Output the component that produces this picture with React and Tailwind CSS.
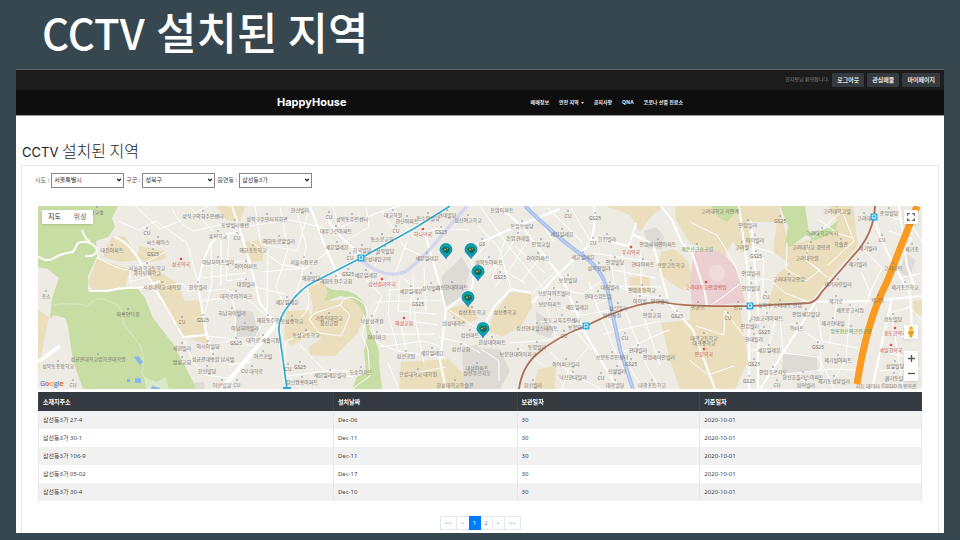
import React from "react";
import { ChevronDown } from "lucide-react";

const GREEN = [
  "M38 205H118L112 217L115 226L108 236L96 240L97 255L88 275L88 289L108 290L137 287L145 297L153 317L173 343L197 388H83L73 360L68 325L65 317L54 314L50 318L52 297L59 277L48 268L38 266Z",
  "M324 283Q329 290 340 289Q356 290 364 302L370 330Q381 346 379 362L382 388H352L357 376L366 372L364 350L367 335L365 316Q357 296 340 295Q330 299 324 300L328 292Z",
  "M711 205H742L727 221L718 216Z",
  "M780 205H805L809 232L790 246L785 245L788 225Z",
  "M808 232L829 227L838 219L836 229L824 236L812 240Z",
];

const TAN = [
  "M78 252L87 251L83 273L80 272Z",
  "M112 236L125 235L139 259L119 261L103 256Z",
  "M97 258L130 268L125 287L93 289L88 281Z",
  "M139 245L166 250L165 258L146 262L138 256Z",
  "M150 266L176 281L185 300L200 299L205 335L182 337L172 320L158 293L146 275Z",
  "M190 338L206 335L208 343Z",
  "M38 309L49 316L43 345L38 372Z",
  "M216 205H245L240 221L226 219Z",
  "M245 240L264 239L263 260L251 261Z",
  "M308 286L324 281L331 300L352 297L365 308L358 332L335 355L310 354L309 346L322 337L308 330L313 307Z",
  "M286 310L309 309L311 332L292 345L284 338Z",
  "M401 361L449 358L465 375L463 388H399Z",
  "M446 308L469 302L478 318L461 324Z",
  "M494 313L510 291L531 292L532 306L521 325L502 336L488 330Z",
  "M538 368L556 365L555 388H533Z",
  "M605 205H665L653 213L640 231L630 214Z",
  "M661 251L674 248L688 260L693 281L682 289L668 280L657 270Z",
  "M629 276L649 275L651 291L630 293Z",
  "M661 322L690 319L690 305H740L748 360L735 388H680L670 359Z",
  "M675 205H712L719 216L742 205H779L789 245L808 239L824 236L837 220L828 205H853L858 245L830 276L812 299L768 303L777 273L790 263L773 251L777 221L746 221L753 245L742 252L733 241L724 255L711 247L690 243L676 219Z",
  "M913 300L923 299V314L914 315Z",
];

const GREY = [
  "M235 308L253 311L259 335L236 336Z",
  "M442 275L462 256L470 270L462 296L444 306Z",
  "M462 347L478 343V388H464Z",
  "M478 347L500 348L510 370L500 388H478Z",
  "M536 310L545 317L554 330L550 337L537 333Z",
  "M644 230L656 226L664 235L662 249L648 247Z",
  "M783 353L817 354L818 371L782 372Z",
  "M905 252L916 259L909 276L901 272Z",
  "M191 382L204 381L205 388H190Z",
];

const MAIN_ROADS = [
  "M38 255Q46 262 54 257T73 251L78 242Q89 238 96 247Q99 252 91 255L85 255",
  "M82 229Q85 238 90 241",
  "M89 290L108 290Q122 286 137 287L145 286L160 280",
  "M114 236Q130 240 144 268Q160 295 183 336L206 334",
  "M198 284Q201 305 207 335L212 352",
  "M198 284Q203 255 212 241Q223 231 238 232",
  "M232 205L242 235L252 270L260 302L276 323",
  "M276 323L220 388",
  "M310 205L323 240L342 284",
  "M326 216Q339 238 361 253",
  "M423 225L438 278L446 309L440 360L446 388",
  "M468 248Q477 275 471 289L446 309",
  "M500 205L522 226L562 277L585 332L618 388",
  "M470 246L520 224L560 208",
  "M594 205Q597 239 583 250L554 277L532 302",
  "M480 332L494 306L511 288L531 292",
  "M632 233L653 243L669 302L693 329L715 388",
  "M595 237L629 245L636 222",
  "M690 245L705 292L707 305",
  "M661 205L672 219L682 242L690 251",
  "M739 205L749 279V388",
  "M751 220L758 302V388",
  "M875 220Q880 238 894 264L910 293L912 328",
  "M815 302L760 388",
  "M810 301L870 300L922 295",
  "M892 296L872 388",
  "M899 205L907 265L914 285",
];

const MINOR_ROADS = [
  "M97 256Q113 266 126 269L143 263L167 250", "M130 265V281L159 272", "M165 285L182 282L190 292",
  "M118 220L139 229L156 220L187 242L192 260L199 284", "M135 205L160 228L180 220L208 205",
  "M172 208Q180 225 194 230L223 223L237 231", "M190 206L213 230", "M205 290L225 288L251 301L276 323",
  "M199 300L231 297L235 308L236 338L208 335", "M211 243L212 282L205 312", "M221 234L221 285", "M229 234L226 280L248 277", "M205 265L251 259", "M202 277L246 272",
  "M208 345L232 339L251 345L261 325", "M212 355L229 364L250 361", "M184 339L193 361L205 374L228 377", "M255 205L261 243L297 250L310 205", "M250 225L291 219L328 228", "M280 205L288 248L276 286L285 305", "M296 207L306 244L302 274L294 299", "M262 271L306 267L330 249", "M268 249L267 314", "M250 240L280 263L305 268", "M255 286L285 293", "M310 330L286 340L284 370L301 388", "M300 344L325 370L353 376", "M308 286Q311 311 301 316", "M315 312L340 304L350 314L341 335L319 332L309 318Z", "M340 304Q346 291 359 299T365 320L362 334L368 349L370 375L352 388", "M286 375L335 369L367 372", "M332 205L340 226L383 210L400 205", "M366 205L369 226L342 242", "M382 210L405 247L424 256", "M392 206L414 236L435 228L470 229", "M407 240L396 271L412 285L410 320L438 324", "M378 260L366 278L382 295L371 320L377 342L398 350L445 357",
  "M391 277L388 314L399 351", "M400 277L398 310L436 313", "M413 272L415 318L424 362", "M424 267L426 310", "M433 286L388 289", "M441 299L375 301", "M401 321L406 349", "M381 333L434 333", "M379 346L424 340L440 345", "M449 309L474 325L488 328", "M439 336L463 342L480 352", "M399 375L446 366", "M388 362L399 388",
  "M480 205L509 246L535 277L552 299", "M478 224L499 247L511 288", "M490 239L473 259", "M505 239L492 278", "M522 226L506 253L486 274", "M530 236L513 263L495 286", "M543 252L521 281", "M556 270L533 292", "M530 205L554 241", "M548 207L583 242", "M571 207L589 238L622 243", "M484 258L525 282", "M515 245L545 272",
  "M552 287L583 293L604 278L632 292L667 298", "M549 301L583 314L616 308L635 304", "M540 321L565 318L592 349", "M510 342L549 339L590 327", "M544 298L558 343", "M589 281L596 303L609 298", "M596 303L621 364L636 388", "M608 315L629 365L643 388", "M625 310L647 365L660 388", "M640 304L660 364", "M603 333L660 320", "M616 355L650 337L669 329", "M551 351L568 371L562 388", "M588 347L567 370L601 388", "M520 348L545 365", "M481 348L499 360V380", "M610 252L614 281", "M622 250L627 293", "M640 252L642 303", "M593 252L650 261", "M613 269L655 277", "M620 285L661 286",
  "M690 221L717 234L728 252L735 264L741 282L724 295L711 304", "M751 245L774 252", "M748 260L764 258L762 304", "M748 280L769 278L785 292L811 302", "M787 242L786 268L806 280L820 269L803 257", "M809 242L806 259L827 276", "M813 236L842 210L854 240L828 264", "M818 218L837 232L853 237", "M760 304L775 320L769 345L751 350", "M780 315L783 352L818 356L835 388", "M791 322L820 341L822 385", "M816 306L822 340L858 347", "M837 302L829 343", "M850 303L846 359L830 385", "M861 271L871 293L859 315", "M863 248L882 267L868 295", "M881 213L910 222L922 241", "M889 230L912 238L895 259", "M900 277L922 272", "M888 313L910 306L922 320", "M887 330L916 340", "M882 350L913 358", "M879 370L921 367", "M890 303L903 388", "M777 374L832 368L863 369", "M696 325L724 334L725 310L744 335", "M689 359L708 374L734 365",
];

const LABELS = [
  [97, 211, "학교숲"], [203, 215, "성북구의회주민센터"], [235, 224, "동방빌라맨션"], [147, 232, "CU"], [158, 241, "씨스페이스"],
  [112, 249, "대진아파트"], [153, 253, "GS25"], [218, 235, "홍익학교"], [237, 237, "CU"], [253, 249, "혜화초등학교"], [181, 263, "성공약국", "r"],
  [147, 267, "서울과학고등학교"], [147, 272, "과학영재학교", "n"], [218, 261, "아남하이츠빌라"], [246, 265, "아이아파트"], [162, 286, "서경대학교 대학원"],
  [198, 286, "한양빌라"], [246, 283, "대원빌라"], [46, 295, "초소"], [236, 295, "대학로아이파크"], [128, 313, "와룡언덕길"], [232, 312, "하남하이빌라"],
  [182, 321, "CU"], [203, 319, "GS25"], [245, 327, "아남하이빌라"], [182, 347, "세한빌라"], [208, 345, "아시아빌딩"], [236, 342, "GS25"],
  [98, 358, "성균관대학교법학관대학원"], [182, 361, "명륜교회"], [213, 358, "성균관대병원 남자빌"], [58, 365, "성북동종합학교"], [207, 370, "한신빌딩"],
  [252, 370, "CU 대학로"], [222, 384, "덕산빌딩"], [237, 384, "CU"], [73, 384, "CU"],
  [300, 209, "한신빌라"], [267, 218, "성북구주민자치회관"], [329, 216, "CU"], [352, 218, "성북동주민센터"], [336, 230, "대우그린아파트"], [279, 240, "혜화동로얄빌라"],
  [337, 246, "세븐일레븐"], [393, 214, "대교학원"], [407, 220, "한신아파트"], [428, 217, "동소문빌딩"], [447, 214, "현대빌딩"], [468, 219, "성신여고학교"], [396, 230, "CU"],
  [382, 238, "동소문교회"], [423, 233, "하나약국", "r"], [441, 231, "GS25"], [362, 249, "한국빌딩"], [385, 250, "성북빌딩"], [350, 257, "CU"], [377, 258, "한성대입구역"],
  [427, 257, "세븐일레븐"], [304, 261, "서울시장공관"], [311, 277, "혜화빌딩"], [336, 280, "혜화동천주교회"], [348, 273, "GS25"], [366, 274, "세븐일레븐"],
  [382, 283, "삼선감리약국", "r"], [411, 290, "세븐일레븐"], [431, 287, "성북빌라"], [452, 286, "삼선현대아파트"], [287, 301, "세븐일레븐"], [418, 303, "GS25"],
  [268, 319, "혜화동주민"], [292, 320, "동성중학교"], [329, 317, "가톨릭대학교"], [329, 322, "성신교정", "n"], [372, 320, "낙산성곽길"], [404, 322, "혜성교회", "r"], [454, 322, "삼성테라스"],
  [306, 334, "동성고등학교"], [377, 336, "아이파크"], [263, 339, "대학로 예술극장"], [472, 311, "삼선초등학교"], [470, 334, "삼선마트"], [461, 348, "삼선교회"],
  [263, 355, "아르코빌"], [406, 355, "삼선공원"], [432, 352, "세븐일레븐"], [288, 368, "CU"], [300, 366, "GS25"], [330, 374, "세븐일레븐빌라"],
  [361, 371, "동숭아파트"], [418, 373, "한성대학교 대학원"], [302, 381, "창신쌍용아파트"], [455, 384, "한성대학교학술관"],
  [502, 209, "돈암아파트"], [568, 215, "CU"], [595, 217, "GS25"], [522, 225, "돈암동성당"], [518, 237, "돈암현대빌"], [562, 233, "세븐일레븐"],
  [541, 243, "안암교실"], [593, 242, "CU"], [607, 238, "한진빌라"], [658, 243, "안암래미안아파트"], [631, 251, "우리약국", "r"], [482, 243, "GS"],
  [538, 257, "아이아파트"], [583, 256, "세븐일레븐"], [489, 261, "성북동아파트"], [599, 267, "성북천빌라"], [615, 261, "안암빌딩"], [643, 263, "현대아파트"],
  [671, 264, "용문고등학교"], [500, 276, "GS25"], [568, 279, "보문빌딩"], [610, 286, "대림빌라"], [642, 289, "안암초등학교"], [554, 292, "보문하이츠빌라"],
  [598, 295, "현대스위트빌"], [550, 303, "보문아파트"], [577, 306, "세븐일레븐"], [640, 300, "아이빌"], [618, 307, "성신빌라"], [660, 300, "안암빌라"],
  [505, 311, "삼선중학교"], [612, 314, "보문사길"], [652, 314, "안암교회"], [677, 315, "GS25"], [562, 319, "동도교육주민센터"], [575, 326, "보문역"],
  [537, 327, "삼선현대힐스테이트"], [564, 335, "CU"], [492, 341, "한성대아파트"], [518, 353, "보문현대아이파크"], [537, 346, "동망빌라"], [625, 337, "CU"],
  [638, 349, "현대빌라"], [612, 356, "보문동주민센터"], [659, 356, "안암래미안빌라"], [477, 367, "대성아파트"], [477, 372, "삼선푸르지오", "n"], [566, 363, "아이파크빌라"],
  [631, 363, "GS25"], [573, 376, "낙산현대빌라"], [601, 377, "CU"], [617, 370, "신설빌라"], [615, 384, "대광빌딩"], [652, 384, "대광초등학교"], [533, 384, "창신빌라"],
  [720, 210, "고려대학교 자연계"], [837, 210, "고려대학교빌"], [748, 224, "안암빌라"], [780, 220, "GS25"], [822, 232, "고려대학교녹지"], [864, 217, "고려대"],
  [889, 212, "종암빌딩"], [755, 239, "아이빌라"], [742, 246, "고려빌"], [811, 246, "고려대학교 경영관"], [841, 243, "학술관"], [882, 239, "CU"], [868, 247, "제기빌라"],
  [697, 248, "개운산근린공원", "g"], [756, 255, "GS25"], [807, 257, "고려대학원"], [912, 248, "제기초"], [858, 263, "제기빌라"], [751, 272, "안암빌라"],
  [751, 287, "안암빌딩"], [789, 278, "고려대학교안암"], [893, 267, "고려대역"], [838, 283, "제기사랑빌라"], [706, 286, "고려대학교안암병원", "r"], [905, 286, "제기초등학교"],
  [766, 296, "CU"], [836, 300, "제기로"], [878, 299, "제기동"], [698, 306, "인촌로"], [780, 304, "성북구 고려대로 안암"], [738, 306, "안암"], [850, 309, "세종문고서점"],
  [806, 313, "안암세븐빌딩"], [767, 317, "더숲고려아파트"], [893, 318, "경동빌딩"], [728, 317, "CU"], [833, 322, "제기현대빌"], [750, 325, "안암빌라"], [764, 331, "GS25"],
  [797, 327, "이마트"], [851, 330, "정릉천산책근린공원", "g"], [895, 332, "경동한약국", "r"], [891, 349, "제일한약국", "r"], [754, 338, "현대빌라"], [704, 337, "대광고등학교"],
  [704, 342, "대광중학교", "n"], [704, 353, "안암약국", "r"], [818, 346, "GS25"], [769, 349, "세븐일레븐"], [838, 359, "제기빌아파트"], [754, 363, "GS25"],
  [773, 371, "안암푸르지오"], [803, 376, "한신휴플러스아파트"], [749, 380, "GS25"], [777, 384, "CU"], [806, 384, "삼익빌라"], [834, 380, "제기동성당빌라"],
  [895, 365, "성일빌딩"], [894, 377, "제기동빌"], [886, 385, "지도 데이터 ©2020 이용약관"],
];

const LABEL_FILL = { r: "fill-[#c9574f]", g: "fill-[#5f9a4a]", n: "fill-[#77736f]" };
const DOT_FILL = { r: "fill-[#e5484d]", g: "fill-[#5f9a4a]" };

const PINS = [[446, 249], [471, 249], [478, 271], [468, 297], [483, 328]];
const STATIONS = [[361, 257], [586, 325], [750, 305], [874, 216]];

const ROWS = [
  ["삼선동3가 27-4", "Dec-06", "30", "2020-10-01"],
  ["삼선동3가 30-1", "Dec-11", "30", "2020-10-01"],
  ["삼선동3가 106-9", "Dec-11", "30", "2020-10-01"],
  ["삼선동3가 05-02", "Dec-17", "30", "2020-10-01"],
  ["삼선동3가 30-4", "Dec-10", "30", "2020-10-01"],
];

function Shapes({ list, className }) {
  return <g className={className}>{list.map((d, i) => <path key={i} d={d} />)}</g>;
}

function Pin({ x, y }) {
  return (
    <g transform={`translate(${x} ${y})`}>
      <path d="M0 9.500C-2 5-6.500 3.500-6.500-.5A6.500 6.500 0 0 1 6.500-.5C6.500 3.500 2 5 0 9.500Z" fill="#1b8fc0" />
      <circle cy="-.5" r="5.300" fill="#07a79b" />
      <path d="M-4-1L-1.500-3.500L3.500-2.500L4 1L1 3.500L-2.500 2Z" fill="#0b7577" />
      <path d="M-3.500-1.500L2-2.500L3.500-.5L-1.500 1Z" fill="#2b5750" />
      <path d="M-1.500 1L0 2.500L2.500 1" stroke="#22474c" strokeWidth="1" fill="none" />
      <path d="M-2-1.200H0V.2H-2ZM.8-1.800H2V-.8H.8Z" fill="#c7a23a" />
    </g>
  );
}

function CityMap() {
  return (
    <svg className="block h-full w-full" viewBox="38 205 884 183" preserveAspectRatio="xMidYMid slice" role="img" aria-label="CCTV 지도">
      <rect x="38" y="205" width="884" height="183" fill="#eeebe5" />
      <Shapes list={TAN} className="fill-[#eadebd]" />
      <Shapes list={GREY} className="fill-[#dedbd7]" />
      <Shapes list={GREEN} className="fill-[#c7dda3]" />
      <path d="M694 252Q704 244 719 251Q738 263 741 283L745 302L692 305L690 280Z" fill="#eccfd0" />
      <circle cx="717" cy="272" r="8" fill="#f1dcd9" />
      <path d="M54 304Q75 301 87 305Q99 293 108 300Q124 303 123 322L139 343Q146 355 142 372L152 388" stroke="#d5e5b9" strokeWidth="1.500" fill="none" />
      <path d="M144 376L157 381L166 376L169 388H146Z" fill="#dae8c8" />
      <g fill="#86b5f3">
        <path d="M134 356L138 355L143 361L140 364Z" />
        <path d="M127 378H130V381H127ZM135 377H141V382H135ZM152 385L160 387V388H151Z" />
      </g>
      <Shapes list={MINOR_ROADS} className="fill-none stroke-white stroke-1" />
      <Shapes list={MAIN_ROADS} className="fill-none stroke-white stroke-2" />
      <path d="M276 323L222 388M38 361L60 345" stroke="#fff" strokeWidth="4" fill="none" />
      <path d="M361 259Q384 279 405 271Q425 256 447 228L467 205" stroke="#d5d7ee" strokeWidth="3.500" fill="none" />
      <path d="M525 205Q552 232 579 252Q602 266 608 291L620 348L633 388" stroke="#a8c2ed" strokeWidth="4" fill="none" />
      <path d="M525 205Q552 232 579 252Q602 266 608 291L620 348L633 388" stroke="#c9d7f2" strokeWidth="1" fill="none" />
      <path d="M287 388L279 330Q278 317 289 304Q299 289 312 282L361 257L415 227L450 205" stroke="#fff" strokeWidth="3.500" fill="none" />
      <path d="M287 388L279 330Q278 317 289 304Q299 289 312 282L361 257L415 227L450 205" stroke="#35abc9" strokeWidth="1.800" fill="none" />
      <path d="M519 388Q522 366 537 353Q556 336 586 325Q635 300 664 301Q680 306 750 305L809 302Q816 301 821 292L852 256Q874 234 875 205" stroke="#ad6f56" strokeWidth="1.800" fill="none" />
      <path d="M911 220L887 281Q867 319 857 383" stroke="#f99b21" strokeWidth="7" fill="none" />
      <path d="M911 221L917 205" stroke="#f99b21" strokeWidth="7" fill="none" />
      <path d="M283 386H291V388H283Z" fill="#28a8df" />
      {LABELS.map(([x, y, text, kind], i) => (
        <g key={i}>
          {kind !== "n" && <circle cx={x} cy={y - 5} r={kind === "r" ? 1.3 : 0.8} className={DOT_FILL[kind] || "fill-[#7480ad]"} />}
          <text x={x} y={y + 2} textAnchor="middle" className={`text-[5px] ${LABEL_FILL[kind] || "fill-[#77736f]"}`}>{text}</text>
        </g>
      ))}
      {STATIONS.map(([x, y], i) => (
        <g key={i} transform={`translate(${x} ${y})`}>
          <rect x="-3.500" y="-3.500" width="7" height="7" rx="1" fill="#23a9e1" />
          <path d="M-1.700-2H1.700V1H-1.700ZM-1.500 2.300L-.7 1M1.500 2.300L.7 1" stroke="#fff" strokeWidth=".8" fill="none" />
        </g>
      ))}
      {PINS.map(([x, y], i) => <Pin key={i} x={x} y={y} />)}
    </svg>
  );
}

function Region({ id, label, value }) {
  return (
    <div className="flex items-center gap-[2px]">
      <label htmlFor={id}>{label} :</label>
      <div className="relative">
        <select id={id} defaultValue={value} className="block h-[15px] w-[73px] appearance-none border border-[#858585] bg-white pl-[2px] text-[6px] text-[#333]">
          <option>{value}</option>
        </select>
        <ChevronDown className="pointer-events-none absolute top-[4px] right-[2px] size-[6px] text-[#222]" strokeWidth={5} />
      </div>
    </div>
  );
}

export default function App() {
  return (
    <div className="min-h-screen bg-[#37474f] px-4 pb-[9px] font-['Noto_Sans','Noto_Sans_CJK_KR',sans-serif]">
      <h1 className="h-[69px] pl-[26px] font-['Noto_Sans_CJK_KR',sans-serif] text-[42px] leading-[62px] font-medium text-white">
        CCTV <span className="ml-[2px] text-[44px]">설치된 지역</span>
      </h1>

      <main className="overflow-hidden border-t border-[#5d686b] bg-white">
        <div className="flex h-5 items-center justify-end gap-[3px] bg-[#1c1c1c] pr-1 text-[6px]">
          <span className="text-[5px] text-[#8a8a8a]">한지형님 환영합니다.</span>
          <button className="h-[14px] rounded-[1px] bg-[#343a40] px-[5px] font-bold text-[#e4e4e4]">로그아웃</button>
          <button className="h-[14px] rounded-[1px] bg-[#343a40] px-[5px] font-bold text-[#e4e4e4]">관심매물</button>
          <button className="h-[14px] rounded-[1px] bg-[#343a40] px-[5px] font-bold text-[#e4e4e4]">마이페이지</button>
        </div>
        <header className="border-b border-[#999] bg-[#0e0e0e]">
          <div className="mx-auto flex h-[25px] w-[406px] items-center justify-between">
            <a href="#home" className="font-[Inter,sans-serif] text-[11px] font-bold text-white">HappyHouse</a>
            <nav className="flex items-center gap-[10px] text-[5px] font-bold text-[#e8e8e8]">
              <a href="#deals">매매정보</a>
              <a href="#safety" className="flex items-center gap-[2px]">
                안전 지역
                <svg className="h-[2px] w-[3px]" viewBox="0 0 3 2"><path d="M0 0H3L1.500 2Z" fill="#ddd" /></svg>
              </a>
              <a href="#notice">공지사항</a>
              <a href="#qna">QNA</a>
              <a href="#clinic">코로나 선별 진료소</a>
            </nav>
          </div>
        </header>

        <h2 className="mt-[22px] mb-px pl-[6px] font-['Noto_Sans_CJK_KR',sans-serif] text-base leading-6 font-light text-[#222]">
          <span className="font-[Inter,sans-serif] text-[13px] font-normal">CCTV</span> 설치된 지역
        </h2>

        <section className="mx-[5px] border border-b-0 border-[#e6e6e6] px-4 pt-[7px] pb-[3px]">
          <form className="-ml-[3px] flex items-center gap-[2px] text-[6px] text-[#555]">
            <Region id="sido" label="시도" value="서울특별시" />
            <Region id="gugun" label="구군" value="성북구" />
            <Region id="dong" label="읍면동" value="삼선동3가" />
          </form>

          <div className="relative mt-[18px] h-[183px] w-full overflow-hidden">
            <CityMap />
            <div className="absolute top-[4px] left-[4px] flex h-[14px] bg-white text-[7px] shadow-sm">
              <button className="w-[25px] text-[#222]">지도</button>
              <button className="w-[26px] text-[#666]">위성</button>
            </div>
            <button aria-label="전체 화면" className="absolute top-[4px] right-[4px] flex size-[14px] items-center justify-center bg-white shadow-sm">
              <svg className="size-[8px]" viewBox="0 0 8 8" fill="none" stroke="#666" strokeWidth="1.200"><path d="M.6 2.800V.6H2.800M5.200 .6H7.400V2.800M7.400 5.200V7.400H5.200M2.800 7.400H.6V5.200" /></svg>
            </button>
            <button aria-label="스트리트 뷰" className="absolute right-[4px] bottom-[50px] flex size-[14px] items-center justify-center bg-white shadow-sm">
              <svg className="h-[12px] w-[8px]" viewBox="0 0 8 12"><circle cx="4" cy="2.200" r="2" fill="#f3b32c" /><path d="M1.500 4.500H6.500L7 8H5.800L5.300 11.500H2.700L2.200 8H1Z" fill="#e9a21e" /></svg>
            </button>
            <div className="absolute right-[4px] bottom-[8px] flex w-[14px] flex-col bg-white shadow-sm">
              <button aria-label="확대" className="flex h-[15px] items-center justify-center">
                <svg className="size-[7px]" viewBox="0 0 7 7" stroke="#555" strokeWidth="1.300"><path d="M0 3.500H7M3.500 0V7" /></svg>
              </button>
              <button aria-label="축소" className="flex h-[15px] items-center justify-center">
                <svg className="size-[7px]" viewBox="0 0 7 7" stroke="#555" strokeWidth="1.300"><path d="M0 3.500H7" /></svg>
              </button>
            </div>
            <span className="absolute bottom-0 left-[2px] font-['Open_Sans',sans-serif] text-[7px] leading-[10px] font-semibold">
              <span className="text-[#4285f4]">G</span><span className="text-[#ea4335]">o</span><span className="text-[#e8ae05]">o</span><span className="text-[#4285f4]">g</span><span className="text-[#34a853]">l</span><span className="text-[#ea4335]">e</span>
            </span>
          </div>

          <table className="mt-[3px] w-full table-fixed border-collapse text-left text-[6px] leading-[8px] text-[#444]">
            <colgroup>
              <col className="w-[33.4%]" />
              <col className="w-[20.8%]" />
              <col className="w-[20.7%]" />
              <col />
            </colgroup>
            <thead className="bg-[#343a40] text-white">
              <tr className="h-[19px]">
                {["소재지주소", "설치날짜", "보관일자", "기준일자"].map((h) => (
                  <th key={h} scope="col" className="border-x border-[#3d444a] px-1 font-bold">{h}</th>
                ))}
              </tr>
            </thead>
            <tbody>
              {ROWS.map((row) => (
                <tr key={row[0]} className="h-[18px] odd:bg-[#f1f1f1]">
                  {row.map((cell, i) => <td key={i} className="border-x border-[#e5e7e9] px-1">{cell}</td>)}
                </tr>
              ))}
            </tbody>
          </table>

          <nav aria-label="페이지" className="mt-[15px] flex justify-center text-[6px] text-[#5b8fe0]">
            <button className="h-[14px] w-[17px] border border-[#e3e8ed]">&lt;&lt;</button>
            <button className="h-[14px] w-[12px] border-y border-[#e3e8ed]">&lt;</button>
            <button aria-current="page" className="h-[14px] w-[12px] bg-[#007bff] text-white">1</button>
            <button className="h-[14px] w-[11px] border-y border-[#e3e8ed]">2</button>
            <button className="h-[14px] w-[12px] border-y border-l border-[#e3e8ed]">&gt;</button>
            <button className="h-[14px] w-[17px] border border-[#e3e8ed]">&gt;&gt;</button>
          </nav>
        </section>
      </main>
    </div>
  );
}
